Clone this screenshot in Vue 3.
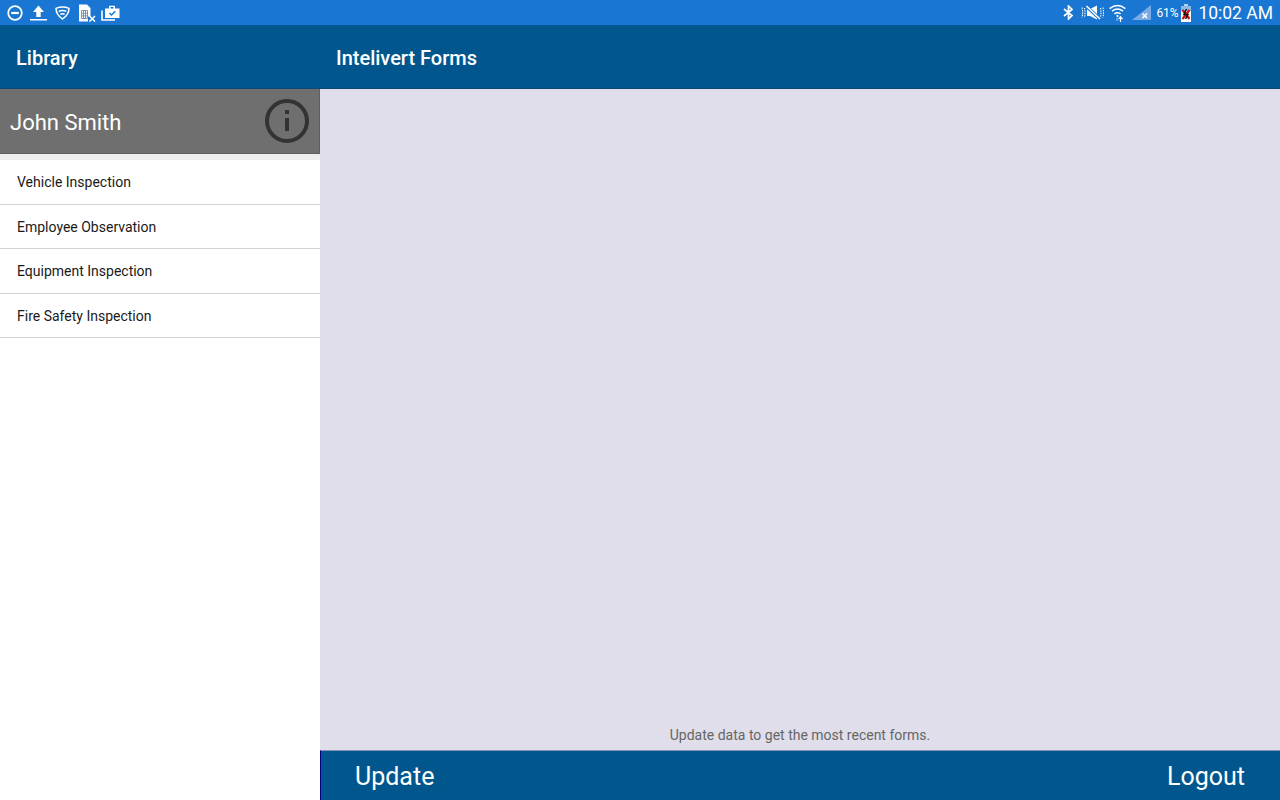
<template>
  <div class="screen">
    <div class="status">
      <div class="status-icons">
        <svg width="16" height="16" viewBox="0 0 16 16" fill="none" stroke="#fff" stroke-width="1.7">
          <circle cx="8" cy="8" r="6.8" />
          <path d="M4.2 8h7.6" stroke-width="2.2" />
        </svg>
        <svg class="upload" width="17" height="16" viewBox="0 0 17 16" fill="#fff">
          <path d="M8.500 0.500l5.500 6.500h-3.300v5H6.300V7H3z" />
          <rect x="0" y="14" width="17" height="1.500" />
        </svg>
        <svg class="shield" width="15" height="14" viewBox="0 0 15 14" fill="none" stroke="#fff" stroke-width="1.500">
          <path d="M1 2.400q6.500-2.800 13 0q0 6-6.500 10.600q-6.500-4.600-6.500-10.600z" />
          <path d="M3.600 5.400q3.900-1.800 7.800 0M5.400 8.200q2.100-1 4.200 0" />
        </svg>
        <svg class="sim" width="18" height="18" viewBox="0 0 18 18">
          <path d="M1 0.500h8l3.500 3.500v8.500H10v5H1z" fill="#fff" />
          <path d="M3.500 6.500h6v8h-6zM3.500 9.200h6M3.500 11.900h6M5.500 6.500v8M7.500 6.500v8" stroke="#5f7f9f" fill="none" stroke-width="0.800" />
          <path d="M11.500 12l5.500 5.500M17 12l-5.500 5.500" stroke="#fff" stroke-width="1.600" />
        </svg>
        <svg class="case" width="19" height="16" viewBox="0 0 19 16">
          <path d="M1 5.500v9.500h13" stroke="#fff" stroke-width="1.600" fill="none" />
          <path d="M4 3.500h4V0.800h6v2.700h4.500V13H4z" fill="#fff" />
          <rect x="9.500" y="2" width="3" height="1.500" fill="#1976d2" />
          <path d="M8.500 8l2 2 3.800-3.800" stroke="#1976d2" stroke-width="1.500" fill="none" />
        </svg>
      </div>
      <div class="status-right">
        <svg width="11" height="15" viewBox="0 0 11 15" fill="none" stroke="#fff" stroke-width="1.700">
          <path d="M1 4l8 6.500-3.500 3.500V1l3.500 3.500L1 11" />
        </svg>
        <svg class="mute" width="23" height="15" viewBox="0 0 23 15" fill="none" stroke="#fff">
          <path d="M6 4v7h3l7 3.500V0.500L9 4z" fill="#fff" stroke="none" />
          <path d="M5 1l14 13" stroke="#1976d2" stroke-width="3.200" />
          <path d="M5.500 1l13.500 13" stroke-width="1.600" />
          <path d="M3.500 3q1 4.500 0 9M1 2.500q1.200 5 0 10M19.500 3q1 4.500 0 9M22 2.500q1 5 0 10" stroke-dasharray="1.400 1" stroke-width="1.100" />
        </svg>
        <svg class="wifi" width="17" height="18" viewBox="0 0 17 18" fill="none" stroke="#fff" stroke-width="1.500">
          <path d="M0.600 4.600q7.900-6 15.800 0M3 7.200q5.500-4.200 11 0M5.400 9.800q3.100-2.300 6.200 0" />
          <path d="M8.500 11v2" stroke-width="1.800" />
          <path d="M11.500 13v5M9.500 15.200l2-2.400 2 2.400" stroke-width="1.200" />
          <path d="M8 14v3" stroke-width="1" stroke="#a8c8ec" />
        </svg>
        <svg class="signal" width="19" height="15" viewBox="0 0 19 15">
          <path d="M19 0v15H0z" fill="#79aae4" />
          <path d="M10.500 8.500l4.500 4.500M15 8.500L10.500 13" stroke="#fff" stroke-width="1.600" />
        </svg>
        <span class="percent">61%</span>
        <svg class="battery" width="10" height="18" viewBox="0 0 10 18">
          <rect x="3" y="0" width="4" height="2" fill="#b9d3ee" />
          <rect x="0" y="2" width="10" height="16" fill="#fff" />
          <rect x="0" y="2" width="10" height="5" fill="#8db9e8" />
          <path d="M1.500 6l7 9M8.500 6l-7 9" stroke="#d01010" stroke-width="2.200" />
          <path d="M5.500 5L3 10.500h4L4.500 15" stroke="#111" stroke-width="1.500" fill="none" />
        </svg>
        <span class="clock">10:02 AM</span>
      </div>
    </div>

    <div class="body">
      <aside class="sidebar">
        <div class="bar side-bar">Library</div>
        <div class="user">
          <span class="user-name">John Smith</span>
          <svg width="44" height="44" viewBox="0 0 44 44">
            <circle cx="22" cy="22" r="20" fill="none" stroke="#333" stroke-width="4" />
            <rect x="20" y="19" width="4" height="13" fill="#333" />
            <rect x="20" y="11" width="4" height="4" fill="#333" />
          </svg>
        </div>
        <div class="gap"></div>
        <ul class="forms">
          <li v-for="form in forms" :key="form">{{ form }}</li>
        </ul>
      </aside>

      <main class="content">
        <div class="bar main-bar">Intelivert Forms</div>
        <div class="empty">
          <p class="hint">Update data to get the most recent forms.</p>
        </div>
        <div class="footer">
          <span>Update</span>
          <span>Logout</span>
        </div>
      </main>
    </div>
  </div>
</template>

<script setup>
const forms = [
  "Vehicle Inspection",
  "Employee Observation",
  "Equipment Inspection",
  "Fire Safety Inspection",
];
</script>

<style>
body {
  margin: 0;
}
</style>

<style scoped>
.screen {
  width: 1280px;
  height: 800px;
  display: flex;
  flex-direction: column;
  overflow: hidden;
  font-family: Roboto, "Liberation Sans", sans-serif;
}

.status {
  height: 25px;
  flex: none;
  background: #1976d2;
  display: flex;
  justify-content: space-between;
  align-items: center;
  color: #fff;
}

.status-icons {
  display: flex;
  align-items: center;
  padding-left: 7px;
}

.upload {
  margin-left: 7px;
}

.shield {
  margin-left: 8px;
}

.sim {
  margin-left: 8px;
}

.case {
  margin-left: 5px;
}

.status-right {
  display: flex;
  align-items: center;
  padding-right: 7px;
}

.mute {
  margin-left: 7px;
}

.wifi {
  margin-left: 5px;
}

.signal {
  margin-left: 6px;
}

.percent {
  font-size: 12px;
  width: 21px;
  margin-left: 5px;
  white-space: nowrap;
}

.battery {
  margin-left: 4px;
}

.clock {
  font-size: 17.5px;
  margin-left: 7px;
  white-space: nowrap;
}

.body {
  flex: 1;
  display: flex;
  min-height: 0;
}

.sidebar {
  width: 320px;
  flex: none;
  background: #fff;
  display: flex;
  flex-direction: column;
}

.bar {
  height: 61px;
  padding-top: 2px;
  background: #01578d;
  border-bottom: 1px solid #0a4a75;
  color: #fff;
  font-size: 20px;
  font-weight: 500;
  display: flex;
  align-items: center;
  padding-left: 16px;
}

.user {
  height: 64px;
  background: #6f6f6f;
  border-bottom: 1px solid #5f5f5f;
  border-right: 1px solid #5f5f5f;
  color: #fff;
  display: flex;
  align-items: center;
  justify-content: space-between;
  padding: 0 10px;
}

.user-name {
  font-size: 22px;
  padding-top: 2px;
}

.gap {
  height: 6px;
  background: #eeeeee;
}

.forms {
  list-style: none;
  margin: 0;
  padding: 0;
}

.forms li {
  box-sizing: border-box;
  height: 44.5px;
  line-height: 45px;
  padding-left: 17px;
  font-size: 14px;
  color: #1a1a1a;
  border-bottom: 1px solid #d4d4d4;
}

.content {
  flex: 1;
  display: flex;
  flex-direction: column;
  background: #e0deea;
  min-width: 0;
}

.empty {
  flex: 1;
  display: flex;
  align-items: flex-end;
  justify-content: center;
}

.hint {
  margin: 0 0 7px;
  font-size: 14px;
  color: #666;
}

.footer {
  height: 48px;
  padding: 1px 35px 0 34px;
  flex: none;
  background: #01578d;
  border-top: 1px solid #8892b4;
  border-left: 1px solid #000080;
  color: #fff;
  font-size: 25px;
  display: flex;
  align-items: center;
  justify-content: space-between;
}
</style>
